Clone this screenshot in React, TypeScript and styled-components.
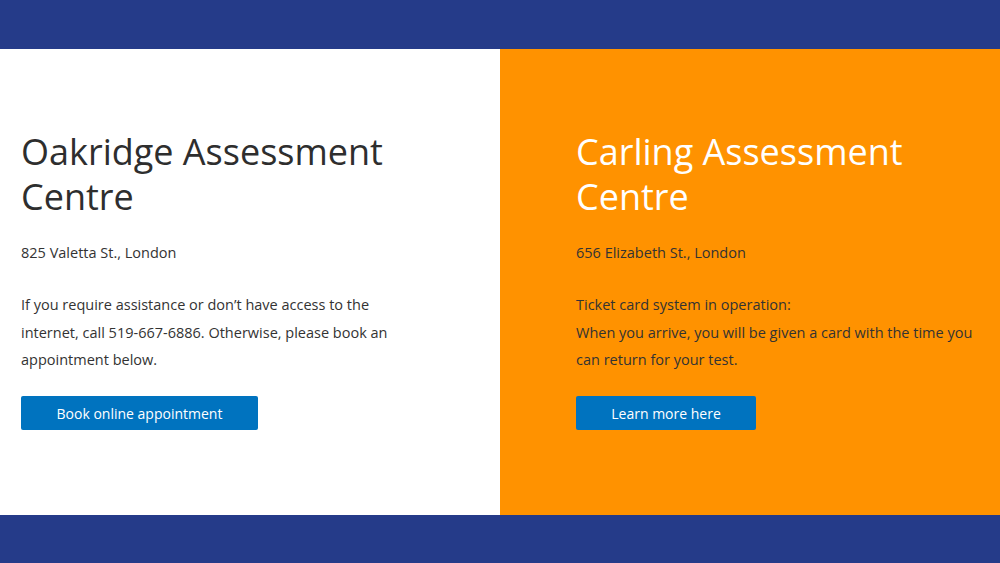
import React from "react";
import styled, { createGlobalStyle } from "styled-components";

const Global = createGlobalStyle`
  html, body { margin: 0; padding: 0; }
  body { font-family: "Open Sans", "Noto Sans", sans-serif; color: #333; }
`;

const Page = styled.div`
  width: 1000px;
  height: 563px;
  display: flex;
  flex-direction: column;
  overflow: hidden;
`;

const Bar = styled.div<{ $h: number }>`
  height: ${(p) => p.$h}px;
  background: #253b89;
  flex-shrink: 0;
`;

const Columns = styled.div`
  flex: 1;
  display: grid;
  grid-template-columns: 500px 500px;
`;

const Column = styled.section<{ $orange?: boolean; $padLeft: number }>`
  background: ${(p) => (p.$orange ? "#ff9200" : "#ffffff")};
  padding: 80px 10px 0 ${(p) => p.$padLeft}px;
  display: flex;
  flex-direction: column;
  align-items: flex-start;
`;

const Title = styled.h2<{ $light?: boolean }>`
  margin: 0;
  font-weight: 400;
  font-size: 36px;
  line-height: 45px;
  letter-spacing: 0;
  color: ${(p) => (p.$light ? "#ffffff" : "#2e2e2e")};
`;

const Address = styled.p`
  margin: 20px 0 0;
  font-size: 14.5px;
  line-height: 28px;
  color: #333;
`;

const Body = styled.p<{ $w: number }>`
  margin: 24px 0 0;
  font-size: 14.5px;
  line-height: 27.7px;
  color: #333;
  max-width: ${(p) => p.$w}px;
`;

const Button = styled.a<{ $w: number }>`
  margin-top: 22px;
  width: ${(p) => p.$w}px;
  height: 34px;
  box-sizing: border-box;
  background: #0073bf;
  color: #fff;
  border-radius: 2px;
  display: flex;
  align-items: center;
  justify-content: center;
  font-size: 14px;
  text-decoration: none;
`;

export default function App() {
  return (
    <>
      <Global />
      <Page>
        <Bar $h={49} />
        <Columns>
          <Column $padLeft={21}>
            <Title>
              Oakridge Assessment
              <br />
              Centre
            </Title>
            <Address>825 Valetta St., London</Address>
            <Body $w={395}>
              If you require assistance or don’t have access to the internet, call
              519-667-6886. Otherwise, please book an appointment below.
            </Body>
            <Button $w={237} href="#">Book online appointment</Button>
          </Column>
          <Column $orange $padLeft={76}>
            <Title $light>
              Carling Assessment
              <br />
              Centre
            </Title>
            <Address>656 Elizabeth St., London</Address>
            <Body $w={410}>
              Ticket card system in operation:
              <br />
              When you arrive, you will be given a card with the time you can
              return for your test.
            </Body>
            <Button $w={180} href="#">Learn more here</Button>
          </Column>
        </Columns>
        <Bar $h={48} />
      </Page>
    </>
  );
}
